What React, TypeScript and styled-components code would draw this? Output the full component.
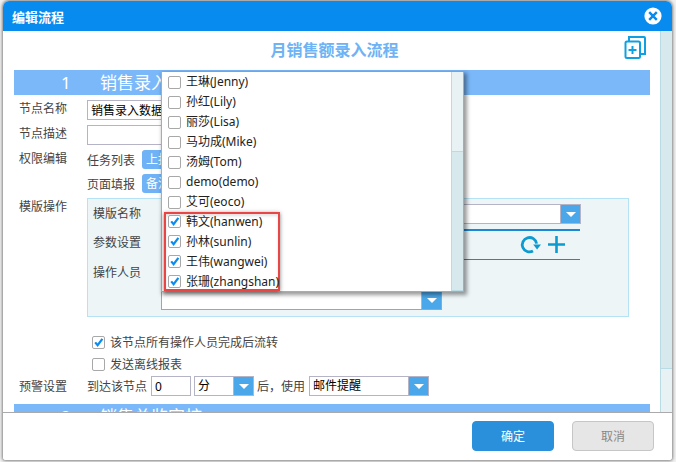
import React from 'react';
import styled, { createGlobalStyle } from 'styled-components';

const GlobalStyle = createGlobalStyle`
  html, body {
    margin: 0;
    padding: 0;
    background: #f0f0f0;
    font-family: "Noto Sans", "Noto Sans CJK SC", sans-serif;
    font-size: 12px;
    color: #444;
  }
`;

const Stage = styled.div`
  width: 676px;
  height: 462px;
  box-sizing: border-box;
  padding: 1px 4px 2px 3px;
  overflow: hidden;
`;

const Dialog = styled.div`
  height: 459px;
  display: flex;
  flex-direction: column;
  background: #fff;
  border-radius: 6px 6px 3px 3px;
  box-shadow: 0 0 3px 1px rgba(0, 0, 0, 0.45);
  overflow: hidden;
`;

const DialogHeader = styled.div`
  height: 30px;
  flex: none;
  display: flex;
  align-items: center;
  justify-content: space-between;
  padding: 0 10px 0 9px;
  background: #088bee;
  color: #fff;
  font-size: 13px;
  font-weight: 700;
`;

const CloseButton = styled.svg`
  width: 18px;
  height: 18px;
  display: block;
`;

const DialogBody = styled.div`
  height: 381px;
  flex: none;
  display: flex;
  overflow: hidden;
`;

const Content = styled.div`
  flex: 1;
  min-width: 0;
  padding: 0 10px 0 11px;
`;

const FlowTitle = styled.div`
  height: 39px;
  box-sizing: border-box;
  display: flex;
  align-items: center;
  justify-content: center;
  position: relative;
  padding: 0 0 4px 5px;
  color: #6db3f5;
  font-size: 16px;
  font-weight: 700;
`;

const CopyIcon = styled.svg`
  position: absolute;
  right: 4px;
  top: 5px;
  width: 22px;
  height: 23px;
`;

const SectionBar = styled.div`
  height: 25px;
  flex: none;
  display: flex;
  align-items: center;
  background: #7ab8fa;
  color: #fff;
  font-size: 17px;
  line-height: 25px;
`;

const SectionNumber = styled.span`
  width: 86px;
  padding-left: 47px;
  box-sizing: border-box;
`;

const FieldRow = styled.div`
  display: flex;
  align-items: flex-start;
  margin-top: 5px;
`;

const RowLabel = styled.div`
  width: 73px;
  flex: none;
  padding-left: 5px;
  box-sizing: border-box;
  line-height: 17px;
`;

const TextInput = styled.input<{ $width: number }>`
  width: ${(p) => p.$width}px;
  height: 20px;
  box-sizing: border-box;
  border: 1px solid #b4b4c6;
  padding: 0 3px;
  font: inherit;
  color: #000;
  outline: none;
`;

const PermissionLine = styled.div`
  display: flex;
  align-items: center;
  height: 19px;
`;

const PermissionStack = styled.div`
  display: flex;
  flex-direction: column;
  gap: 5px;
`;

const PermissionLabel = styled.span`
  width: 55px;
`;

const BlueTag = styled.span`
  padding: 0 8px 0 4px;
  height: 19px;
  line-height: 19px;
  background: #6fb2f5;
  color: #fff;
  border-radius: 3px;
`;

const TemplatePanel = styled.div`
  width: 542px;
  height: 119px;
  box-sizing: border-box;
  background: #edf5f7;
  border: 1px solid #b5e3f5;
  padding: 5px 0 0 5px;
  display: flex;
  flex-direction: column;
`;

const PanelRow = styled.div<{ $height: number }>`
  display: flex;
  align-items: flex-start;
  height: ${(p) => p.$height}px;
`;

const PanelLabel = styled.div<{ $top?: number }>`
  width: 68px;
  flex: none;
  padding-top: ${(p) => p.$top ?? 0}px;
  line-height: 17px;
`;

const SelectBox = styled.div<{ $width: number; $blue?: boolean; $height?: number }>`
  position: relative;
  width: ${(p) => p.$width}px;
  height: ${(p) => p.$height ?? 20}px;
  box-sizing: border-box;
  flex: none;
  display: flex;
  justify-content: space-between;
  background: #fff;
  border: 1px solid ${(p) => (p.$blue ? '#7aaedc' : '#b4b4c6')};
  color: #000;
  line-height: 18px;
  padding-left: 3px;
`;

const SelectArrow = styled.span`
  width: 19px;
  height: 18px;
  align-self: flex-end;
  display: flex;
  align-items: center;
  justify-content: center;
  background: #4aa8ea;
  border-left: 1px solid #b4b4c6;

  &::after {
    content: '';
    border-left: 5px solid transparent;
    border-right: 5px solid transparent;
    border-top: 5px solid #fff;
  }
`;

const ParamTable = styled.div`
  width: 419px;
  height: 31px;
  box-sizing: border-box;
  border-top: 2px solid #1a88d4;
  border-bottom: 1px solid #1a88d4;
  display: flex;
  align-items: center;
  justify-content: flex-end;
  gap: 7px;
  padding: 0 14px 2px 0;
`;

const ParamIcon = styled.svg`
  width: 19px;
  height: 19px;
  display: block;
  overflow: visible;
`;

const Dropdown = styled.div`
  position: absolute;
  left: -1px;
  bottom: 17px;
  width: 303px;
  height: 220px;
  box-sizing: border-box;
  display: flex;
  background: #fff;
  border: 1px solid #7ab8ea;
  border-top: 0;
  box-shadow: 2px 2px 4px 1px rgba(0, 0, 0, 0.4);
  color: #222;
  z-index: 5;
`;

const DropdownList = styled.div`
  flex: 1;
  min-width: 0;
`;

const ScrollBar = styled.div`
  width: 12px;
  flex: none;
  background: #e8f1f3;
  border-left: 1px solid #b9dbe3;
  box-sizing: border-box;
  display: flex;
  flex-direction: column;
`;

const ScrollPart = styled.div<{ $height?: number; $thumb?: boolean }>`
  flex: ${(p) => (p.$height ? `0 0 ${p.$height}px` : '1')};
  background: ${(p) => (p.$thumb ? '#d7e9ed' : '#e8f1f3')};
  border-bottom: 1px solid ${(p) => (p.$thumb || p.$height ? '#b9dbe3' : 'transparent')};
`;

const PersonRow = styled.div`
  height: 20px;
  flex: none;
  display: flex;
  align-items: center;
  padding-left: 6px;
  gap: 5px;
  line-height: 20px;
  white-space: nowrap;
`;

const CheckedGroup = styled.div`
  width: 116px;
  height: 79px;
  box-sizing: border-box;
  margin-left: 2px;
  display: flex;
  flex-direction: column;
  justify-content: center;
  border: 2px solid #e84545;
  box-shadow: 0 1px 4px rgba(0, 0, 0, 0.5), inset 0 2px 3px rgba(0, 0, 0, 0.12);

  ${PersonRow} {
    padding-left: 2px;
  }
`;

const Box = styled.span`
  width: 13px;
  height: 13px;
  box-sizing: border-box;
  flex: none;
  position: relative;
  background: #fff;
  border: 1px solid #a8a8a8;
  border-radius: 2px;
`;

const Tick = styled.svg`
  position: absolute;
  left: 0;
  top: 0;
  width: 11px;
  height: 11px;
`;

const CheckRow = styled.div<{ $top: number }>`
  display: flex;
  align-items: center;
  gap: 5px;
  height: 16px;
  margin: ${(p) => p.$top}px 0 0 78px;
`;

const WarnRow = styled.div`
  display: flex;
  align-items: center;
  height: 20px;
  margin-top: 4px;
`;

const WarnText = styled.span<{ $width: number }>`
  width: ${(p) => p.$width}px;
  flex: none;
`;

const NarrowInput = styled(TextInput)`
  margin-right: 3px;
`;

const SectionTwo = styled(SectionBar)`
  margin-top: 8px;
`;

const DialogFooter = styled.div`
  flex: 1;
  display: flex;
  justify-content: flex-end;
  align-items: flex-start;
  gap: 18px;
  padding: 8px 18px 0 0;
  border-top: 1px solid #aaa;
  background: #fff;
`;

const FooterButton = styled.button<{ $primary?: boolean }>`
  width: 82px;
  height: 30px;
  border-radius: 4px;
  border: 1px solid ${(p) => (p.$primary ? '#2a90db' : '#c6c6c6')};
  background: ${(p) => (p.$primary ? '#2a90db' : '#e6e6e6')};
  color: ${(p) => (p.$primary ? '#fff' : '#888')};
  font: inherit;
`;

const people = ['王琳(Jenny)', '孙红(Lily)', '丽莎(Lisa)', '马功成(Mike)', '汤姆(Tom)', 'demo(demo)', '艾可(eoco)'];
const checkedPeople = ['韩文(hanwen)', '孙林(sunlin)', '王伟(wangwei)', '张珊(zhangshan)'];

const CheckBox: React.FC<{ checked?: boolean }> = ({ checked }) => (
  <Box>
    {checked && (
      <Tick viewBox="0 0 11 11">
        <path d="M2.2 5.4 L4.6 8.2 L9.4 1.8" fill="none" stroke="#0a8cf0" strokeWidth="2.2" />
      </Tick>
    )}
  </Box>
);

export default function App() {
  return (
    <Stage>
      <GlobalStyle />
      <Dialog>
        <DialogHeader>
          编辑流程
          <CloseButton viewBox="0 0 18 18">
            <circle cx="9" cy="9" r="8.6" fill="#fff" />
            <path d="M5.2 5.2 L12.8 12.8 M12.8 5.2 L5.2 12.8" stroke="#088bee" strokeWidth="2.4" />
          </CloseButton>
        </DialogHeader>

        <DialogBody>
          <Content>
            <FlowTitle>
              月销售额录入流程
              <CopyIcon viewBox="0 0 22 23" fill="none" stroke="#0ea0e0" strokeWidth="2">
                <rect x="1.5" y="5.5" width="14.5" height="16.5" rx="1.5" />
                <path d="M5 5 V1 H20 A1 1 0 0 1 21 2 V18 H16" />
                <path d="M8.5 10 V18 M4.5 14 H12.5" />
              </CopyIcon>
            </FlowTitle>
            <SectionBar>
              <SectionNumber>1</SectionNumber>
              销售录入数据
            </SectionBar>

            <FieldRow>
              <RowLabel>节点名称</RowLabel>
              <TextInput $width={200} readOnly value="销售录入数据" />
            </FieldRow>
            <FieldRow>
              <RowLabel>节点描述</RowLabel>
              <TextInput $width={200} readOnly value="" />
            </FieldRow>
            <FieldRow>
              <RowLabel>权限编辑</RowLabel>
              <PermissionStack>
                <PermissionLine>
                  <PermissionLabel>任务列表</PermissionLabel>
                  <BlueTag>上报</BlueTag>
                </PermissionLine>
                <PermissionLine>
                  <PermissionLabel>页面填报</PermissionLabel>
                  <BlueTag>备注</BlueTag>
                </PermissionLine>
              </PermissionStack>
            </FieldRow>
            <FieldRow>
              <RowLabel>模版操作</RowLabel>
              <TemplatePanel>
                <PanelRow $height={25}>
                  <PanelLabel $top={1}>模版名称</PanelLabel>
                  <SelectBox $width={420}>
                    <span />
                    <SelectArrow />
                  </SelectBox>
                </PanelRow>
                <PanelRow $height={35}>
                  <PanelLabel $top={5}>参数设置</PanelLabel>
                  <ParamTable>
                    <ParamIcon viewBox="0 0 19 19" fill="none" stroke="#0b9bd0" strokeWidth="2.8">
                      <path d="M15.6 8.6 A7.2 7.2 0 1 0 12 16" />
                      <path d="M12.2 9.4 H20 L16.1 14.6 Z" fill="#0b9bd0" stroke="none" />
                    </ParamIcon>
                    <ParamIcon viewBox="0 0 19 19" fill="none" stroke="#0b9bd0" strokeWidth="2.6">
                      <path d="M9.5 1 V18 M1 9.5 H18" />
                    </ParamIcon>
                  </ParamTable>
                </PanelRow>
                <PanelRow $height={46}>
                  <PanelLabel>操作人员</PanelLabel>
                  <SelectBox $width={281} $height={46} $blue>
                    <span />
                    <SelectArrow />
                    <Dropdown>
                      <DropdownList>
                        {people.map((name) => (
                          <PersonRow key={name}>
                            <CheckBox />
                            {name}
                          </PersonRow>
                        ))}
                        <CheckedGroup>
                          {checkedPeople.map((name) => (
                            <PersonRow key={name}>
                              <CheckBox checked />
                              {name}
                            </PersonRow>
                          ))}
                        </CheckedGroup>
                      </DropdownList>
                      <ScrollBar>
                        <ScrollPart $height={79} />
                        <ScrollPart $thumb />
                      </ScrollBar>
                    </Dropdown>
                  </SelectBox>
                </PanelRow>
              </TemplatePanel>
            </FieldRow>

            <CheckRow $top={17}>
              <CheckBox checked />
              该节点所有操作人员完成后流转
            </CheckRow>
            <CheckRow $top={6}>
              <CheckBox />
              发送离线报表
            </CheckRow>

            <WarnRow>
              <RowLabel>预警设置</RowLabel>
              <WarnText $width={64}>到达该节点</WarnText>
              <NarrowInput $width={40} readOnly value="0" />
              <SelectBox $width={60}>
                分
                <SelectArrow />
              </SelectBox>
              <WarnText $width={55}>&nbsp;后，使用</WarnText>
              <SelectBox $width={120}>
                邮件提醒
                <SelectArrow />
              </SelectBox>
            </WarnRow>
            <SectionTwo>
              <SectionNumber>2</SectionNumber>
              销售总监审核
            </SectionTwo>
          </Content>
          <ScrollBar>
            <ScrollPart $height={337} $thumb />
            <ScrollPart />
          </ScrollBar>
        </DialogBody>

        <DialogFooter>
          <FooterButton $primary>确定</FooterButton>
          <FooterButton>取消</FooterButton>
        </DialogFooter>
      </Dialog>
    </Stage>
  );
}
